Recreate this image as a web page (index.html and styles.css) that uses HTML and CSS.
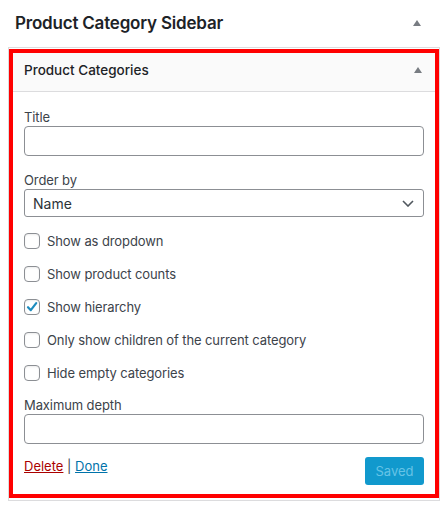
FILE: index.html
```html
<!DOCTYPE html>
<html>
<head>
<meta charset="utf-8">
<link rel="stylesheet" href="styles.css">
</head>
<body>
<div class="sidebar">
  <div class="sidebar-head">
    <h2 class="sidebar-title">Product Category Sidebar</h2>
    <svg class="arrow" width="8" height="6" viewBox="0 0 8 6"><path d="M4 0L8 6H0Z" fill="#787c82"/></svg>
  </div>
  <div class="widget">
    <div class="widget-inner">
      <div class="widget-head">
        <h3 class="widget-title">Product Categories</h3>
        <svg class="arrow" width="8" height="6" viewBox="0 0 8 6"><path d="M4 0L8 6H0Z" fill="#787c82"/></svg>
      </div>
      <div class="widget-body">
        <label class="label">Title</label>
        <div class="input"></div>
        <label class="label mt">Order by</label>
        <div class="select">
          <span>Name</span>
          <svg width="12" height="7" viewBox="0 0 12 7"><path d="M1 1L6 6L11 1" fill="none" stroke="#50575e" stroke-width="1.6"/></svg>
        </div>
        <div class="checks">
          <div class="check"><span class="cb"></span><span>Show as dropdown</span></div>
          <div class="check"><span class="cb"></span><span>Show product counts</span></div>
          <div class="check"><span class="cb"><svg width="14" height="14" viewBox="0 0 14 14"><path d="M3 7.2L5.8 10.2L11.2 3.2" fill="none" stroke="#1e8cbe" stroke-width="2.2" stroke-linecap="round" stroke-linejoin="round"/></svg></span><span>Show hierarchy</span></div>
          <div class="check"><span class="cb"></span><span>Only show children of the current category</span></div>
          <div class="check"><span class="cb"></span><span>Hide empty categories</span></div>
        </div>
        <label class="label mt">Maximum depth</label>
        <div class="input"></div>
        <div class="footer">
          <div class="links"><a class="delete" href="#">Delete</a> <span class="sep">|</span> <a class="done" href="#">Done</a></div>
          <button class="saved">Saved</button>
        </div>
      </div>
    </div>
  </div>
</div>
</body>
</html>
```
FILE: styles.css
```css
* { box-sizing: border-box; }
body {
  margin: 0;
  background: #fff;
  font-family: Inter, "Liberation Sans", sans-serif;
  color: #3c434a;
}
.sidebar {
  width: 432px;
  margin-left: 8px;
}
.sidebar-head {
  height: 47px;
  display: flex;
  align-items: center;
  justify-content: space-between;
  padding: 0 19px 2px 7px;
}
.sidebar-title {
  margin: 0;
  font-size: 17px;
  font-weight: 600;
  letter-spacing: -0.2px;
  color: #1d2327;
}
.widget {
  border: 1px solid #dcdcde;
  padding: 1px 0 2px 0;
}
.widget-inner {
  border: 4px solid #ff0000;
}
.widget-head {
  height: 39px;
  background: #fafafa;
  border-bottom: 1px solid #dcdcde;
  display: flex;
  align-items: center;
  justify-content: space-between;
  padding: 0 13px 5px 11px;
}
.widget-title {
  margin: 0;
  font-size: 13.5px;
  font-weight: 500;
  color: #1d2327;
}
.widget-body {
  padding: 16px 11px 9px 11px;
}
.label {
  display: block;
  font-size: 13px;
  line-height: 18px;
  letter-spacing: -0.1px;
  color: #3c434a;
}
.label.mt { margin-top: 15px; }
.input {
  height: 30px;
  border: 1px solid #8c8f94;
  border-radius: 4px;
  background: #fff;
}
.select {
  height: 28px;
  border: 1px solid #8c8f94;
  border-radius: 3px;
  display: flex;
  align-items: center;
  justify-content: space-between;
  padding: 0 9px 0 8px;
  font-size: 14px;
  color: #2c3338;
}
.checks {
  display: flex;
  flex-direction: column;
  gap: 17px;
  margin-top: 16px;
}
.check {
  display: flex;
  align-items: center;
  gap: 7px;
  height: 16px;
  font-size: 13px;
  letter-spacing: -0.1px;
  color: #3c434a;
}
.cb {
  width: 16px;
  height: 16px;
  border: 1px solid #8c8f94;
  border-radius: 4px;
  display: flex;
  align-items: center;
  justify-content: center;
  flex: none;
  box-shadow: inset 0 1px 2px rgba(0,0,0,0.08);
}
.footer {
  display: flex;
  justify-content: space-between;
  align-items: flex-start;
  margin-top: 13px;
}
.links {
  font-size: 13px;
  line-height: 18px;
}
.delete { color: #a00; text-decoration: underline; }
.done { color: #0073aa; text-decoration: underline; }
.sep { color: #3c434a; }
.saved {
  width: 59px;
  height: 28px;
  border: none;
  border-radius: 3px;
  background: #1199cd;
  color: #66c3e6;
  font-family: inherit;
  font-size: 13px;
  padding: 0;
}
```
